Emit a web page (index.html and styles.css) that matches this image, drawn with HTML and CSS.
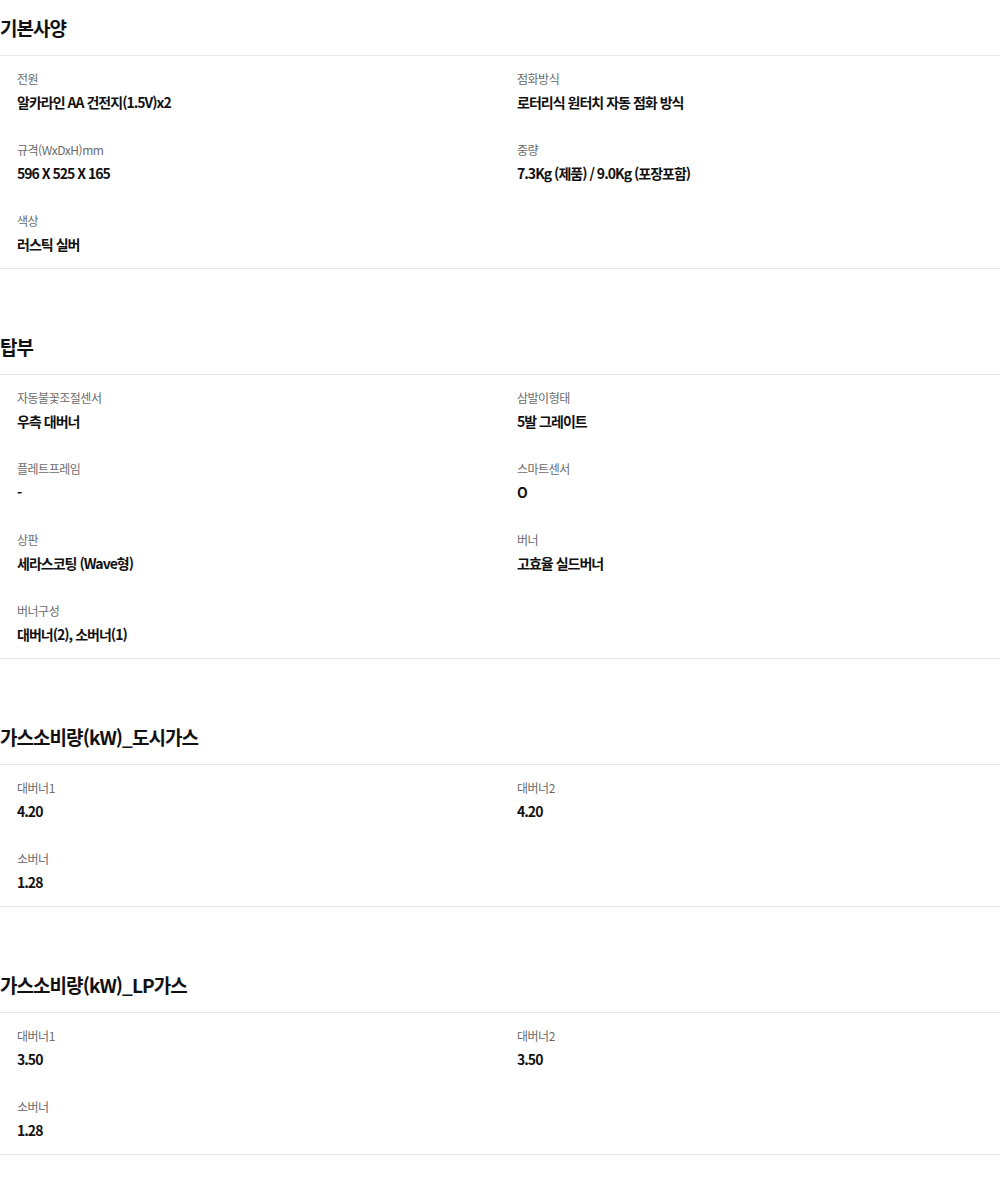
FILE: index.html
```html
<!DOCTYPE html>
<html lang="ko">
<head>
<meta charset="UTF-8">
<meta name="viewport" content="width=device-width, initial-scale=1.0">
<title>제품 사양</title>
<link rel="stylesheet" href="styles.css">
</head>
<body>
    <div class="spec-section">
        <h2 class="spec-title">기본사양</h2>
        <ul class="spec-list">
            <li class="spec-item">
                <p class="spec-label">전원</p>
                <p class="spec-value">알카라인 AA 건전지(1.5V)x2</p>
            </li>
            <li class="spec-item">
                <p class="spec-label">점화방식</p>
                <p class="spec-value">로터리식 원터치 자동 점화 방식</p>
            </li>
            <li class="spec-item">
                <p class="spec-label">규격(WxDxH)mm</p>
                <p class="spec-value">596 X 525 X 165</p>
            </li>
            <li class="spec-item">
                <p class="spec-label">중량</p>
                <p class="spec-value">7.3Kg (제품) / 9.0Kg (포장포함)</p>
            </li>
            <li class="spec-item">
                <p class="spec-label">색상</p>
                <p class="spec-value">러스틱 실버</p>
            </li>
        </ul>
    </div>

    <div class="spec-section">
        <h2 class="spec-title">탑부</h2>
        <ul class="spec-list">
            <li class="spec-item">
                <p class="spec-label">자동불꽃조절센서</p>
                <p class="spec-value">우측 대버너</p>
            </li>
            <li class="spec-item">
                <p class="spec-label">삼발이형태</p>
                <p class="spec-value">5발 그레이트</p>
            </li>
            <li class="spec-item">
                <p class="spec-label">플레트프레임</p>
                <p class="spec-value">-</p>
            </li>
            <li class="spec-item">
                <p class="spec-label">스마트센서</p>
                <p class="spec-value">O</p>
            </li>
            <li class="spec-item">
                <p class="spec-label">상판</p>
                <p class="spec-value">세라스코팅 (Wave형)</p>
            </li>
            <li class="spec-item">
                <p class="spec-label">버너</p>
                <p class="spec-value">고효율 실드버너</p>
            </li>
            <li class="spec-item">
                <p class="spec-label">버너구성</p>
                <p class="spec-value">대버너(2), 소버너(1)</p>
            </li>
        </ul>
    </div>

    <div class="spec-section">
        <h2 class="spec-title">가스소비량(kW)_도시가스</h2>
        <ul class="spec-list">
            <li class="spec-item">
                <p class="spec-label">대버너1</p>
                <p class="spec-value">4.20</p>
            </li>
            <li class="spec-item">
                <p class="spec-label">대버너2</p>
                <p class="spec-value">4.20</p>
            </li>
            <li class="spec-item">
                <p class="spec-label">소버너</p>
                <p class="spec-value">1.28</p>
            </li>
        </ul>
    </div>

    <div class="spec-section">
        <h2 class="spec-title">가스소비량(kW)_LP가스</h2>
        <ul class="spec-list">
            <li class="spec-item">
                <p class="spec-label">대버너1</p>
                <p class="spec-value">3.50</p>
            </li>
            <li class="spec-item">
                <p class="spec-label">대버너2</p>
                <p class="spec-value">3.50</p>
            </li>
            <li class="spec-item">
                <p class="spec-label">소버너</p>
                <p class="spec-value">1.28</p>
            </li>
        </ul>
    </div>
</body>
</html>
```

FILE: styles.css
```css
body {
    margin: 0;
    padding: 0 0 32px;
    font-family: "Noto Sans CJK KR", "Noto Sans", sans-serif;
    color: #111;
    background-color: #fff;
}

.spec-section + .spec-section {
    margin-top: 50px;
}

.spec-title {
    margin: 0;
    padding: 14px 0 13px;
    font-size: 19px;
    line-height: 28px;
    font-weight: 700;
    letter-spacing: -0.05em;
    border-bottom: 1px solid #e6e6e6;
}

.spec-list {
    list-style: none;
    margin: 0;
    padding: 14px 0 13px;
    display: grid;
    grid-template-columns: 1fr 1fr;
    row-gap: 28px;
    border-bottom: 1px solid #e6e6e6;
}

.spec-item {
    padding: 0 17px;
}

.spec-label {
    margin: 0 0 3px;
    font-size: 12px;
    line-height: 18px;
    color: #6b6b6b;
    letter-spacing: -0.04em;
}

.spec-value {
    margin: 0;
    font-size: 14px;
    line-height: 22px;
    font-weight: 700;
    color: #111;
    letter-spacing: -0.07em;
}
```
